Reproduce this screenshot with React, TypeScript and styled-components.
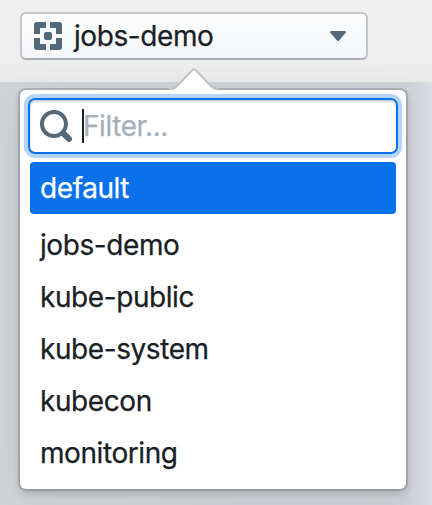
import React from "react";
import styled, { createGlobalStyle } from "styled-components";

const GlobalStyle = createGlobalStyle`
  *, *::before, *::after { box-sizing: border-box; }
  body {
    margin: 0;
    background: #ced3d7;
    color: #182026;
    font-family: Inter, "Liberation Sans", sans-serif;
    font-size: 28px;
  }
`;

const Page = styled.main`
  height: 505px;
  overflow: hidden;
  background: linear-gradient(90deg, #d0d4d7 0, #ced2d6 406px, #d9dee3 432px);
`;

const Header = styled.header`
  height: 82px;
  padding: 12px 20px;
  background: linear-gradient(#efefef 55px, #e9e9e9 82px);
`;

const SelectButton = styled.button`
  display: flex;
  align-items: center;
  width: 348px;
  height: 48px;
  padding: 0 20px 0 12px;
  border: 2px solid #c3c5c9;
  border-bottom-color: #abadb4;
  border-radius: 6px;
  background: linear-gradient(#fdfdfe, #f3f7fa);
  color: inherit;
  font: inherit;
  text-align: left;

  svg { flex: none; display: block; }
`;

const Label = styled.span`
  letter-spacing: -0.42px;
  line-height: 44px;
  white-space: nowrap;
  -webkit-text-stroke: 0.25px currentColor;
`;

const ButtonLabel = styled(Label)`
  flex: 1;
  margin-left: 12px;
`;

const Popover = styled.section`
  position: absolute;
  top: 90px;
  left: 20px;
  width: 386px;
  height: 399px;
  padding: 8px 8px 0;
  border-radius: 6px;
  background: #fff;
  box-shadow: 0 0 0 2px rgba(16, 22, 38, 0.16), 0 4px 8px rgba(16, 22, 26, 0.18),
    0 10px 40px rgba(16, 22, 26, 0.06);
`;

const Arrow = styled.svg`
  position: absolute;
  top: -24px;
  left: 144px;
`;

const FilterField = styled.div`
  display: flex;
  align-items: center;
  height: 56px;
  padding: 0 10px;
  border: 2px solid #0972eb;
  border-radius: 7px;
  box-shadow: 0 0 0 4px #b4d4fa, inset 0 2px 2px rgba(16, 22, 26, 0.2);

  svg { flex: none; }
`;

const TextCursor = styled.span`
  width: 2px;
  height: 34px;
  margin-left: 10px;
  background: #182026;
`;

const Placeholder = styled(Label)`
  margin-left: -1px;
  color: #a4afba;
`;

const Menu = styled.ul`
  margin: 8px 2px 0;
  padding: 0;
  list-style: none;
`;

const MenuItem = styled.li<{ $active?: boolean }>`
  display: flex;
  align-items: center;
  height: 52px;
  padding-left: 10px;
  margin-bottom: ${(p) => (p.$active ? 5 : 0)}px;
  border-radius: 4px;
  background: ${(p) => (p.$active ? "#0972eb" : "transparent")};
  color: ${(p) => (p.$active ? "#fff" : "inherit")};
`;

const namespaces = ["default", "jobs-demo", "kube-public", "kube-system", "kubecon", "monitoring"];

export default function App() {
  return (
    <Page>
      <GlobalStyle />
      <Header>
        <SelectButton>
          <svg width="28" height="28" viewBox="0 0 28 28" fill="#536878">
            <path d="M3 0h9v6H6v6H0V3a3 3 0 0 1 3-3zM16 0h9a3 3 0 0 1 3 3v9h-6V6h-6zM0 16h6v6h6v6H3a3 3 0 0 1-3-3zM22 16h6v9a3 3 0 0 1-3 3h-9v-6h6z" />
            <rect x="10" y="10" width="8" height="8" rx="2" />
          </svg>
          <ButtonLabel>jobs-demo</ButtonLabel>
          <svg width="16" height="10" viewBox="0 0 16 10" fill="#536878">
            <path d="M1 0h14q1.5.5.5 2L9 9.5q-1 1-2 0L.5 2Q-.5.5 1 0z" />
          </svg>
        </SelectButton>
      </Header>
      <Popover>
        <Arrow width="60" height="26" viewBox="0 0 60 26">
          <path d="M5 23C10 23 13 20 16 17L27 5.5Q30 1 33 5.5L44 17C47 20 50 23 55 23" fill="none" stroke="#bfc1c5" strokeWidth="2" />
          <path d="M5 24C10 24 13 22 16.5 18L27.5 6.5Q30 3 32.5 6.5L43.5 18C47 22 50 24 55 24V26H5z" fill="#fff" />
        </Arrow>
        <FilterField>
          <svg width="32" height="32" viewBox="0 0 16 16" fill="#536878">
            <path d="M15.55 13.43l-2.67-2.68a6.94 6.94 0 001.11-3.76c0-3.87-3.13-7-7-7s-7 3.13-7 7 3.13 7 7 7c1.39 0 2.68-.42 3.76-1.11l2.68 2.67a1.498 1.498 0 102.12-2.12zm-8.56-1.44c-2.76 0-5-2.24-5-5s2.24-5 5-5 5 2.24 5 5-2.24 5-5 5z" />
          </svg>
          <TextCursor />
          <Placeholder>Filter...</Placeholder>
        </FilterField>
        <Menu>
          {namespaces.map((name, i) => (
            <MenuItem key={name} $active={i === 0}>
              <Label>{name}</Label>
            </MenuItem>
          ))}
        </Menu>
      </Popover>
    </Page>
  );
}
